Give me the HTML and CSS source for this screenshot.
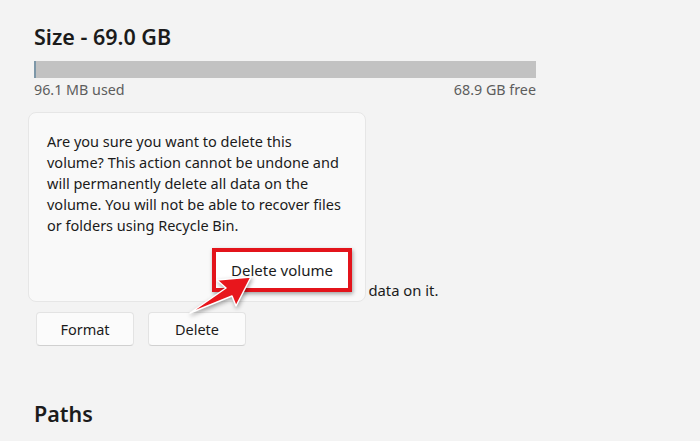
FILE: index.html
```html
<!DOCTYPE html>
<html lang="en">
<head>
    <meta charset="UTF-8">
    <title>Volume properties</title>
    <link rel="stylesheet" href="styles.css">
</head>
<body>
    <div class="page">
        <h2 class="title">Size - 69.0 GB</h2>
        <div class="bar"><div class="bar-used"></div></div>
        <div class="bar-labels">
            <span>96.1 MB used</span>
            <span>68.9 GB free</span>
        </div>
        <p class="format-note">Formatting or deleting this volume will erase all data on it.</p>
        <div class="actions">
            <button class="btn">Format</button>
            <button class="btn">Delete</button>
        </div>
        <h2 class="title paths">Paths</h2>

        <div class="flyout">
            <p>Are you sure you want to delete this<br>
            volume? This action cannot be undone and<br>
            will permanently delete all data on the<br>
            volume. You will not be able to recover files<br>
            or folders using Recycle Bin.</p>
            <div class="flyout-foot">
                <button class="btn confirm">Delete volume</button>
            </div>
        </div>

        <svg class="arrow" width="80" height="60" viewBox="0 0 80 60">
            <polygon points="71,12 37,15 46,23 10,48 52,31 56,41" fill="#e8161c" stroke="#fff" stroke-width="1.5" stroke-linejoin="round"/>
        </svg>
    </div>
</body>
</html>
```

FILE: styles.css
```css
body {
    margin: 0;
    background: #f3f3f3;
    font-family: "Noto Sans", "Open Sans", sans-serif;
    color: #1b1b1b;
}
.page {
    position: relative;
    width: 700px;
    height: 441px;
    padding: 24px 0 0 34px;
    box-sizing: border-box;
    overflow: hidden;
}
.title {
    margin: 0;
    font-size: 21.5px;
    font-weight: 600;
    line-height: 26px;
}
.bar {
    width: 502px;
    height: 17px;
    margin-top: 11px;
    background: #c2c2c2;
}
.bar-used {
    width: 2px;
    height: 100%;
    background: #7d97a8;
}
.bar-labels {
    display: flex;
    justify-content: space-between;
    width: 502px;
    margin-top: 2px;
    font-size: 14.3px;
    line-height: 20px;
    color: #5d5d5d;
}
.format-note {
    margin: 180px 0 0;
    font-size: 14.8px;
    line-height: 20px;
    white-space: nowrap;
}
.actions {
    display: flex;
    gap: 14px;
    margin-top: 12px;
    padding-left: 2px;
}
.btn {
    width: 98px;
    height: 34px;
    font-family: inherit;
    font-size: 14.5px;
    color: #1b1b1b;
    background: #fbfbfb;
    border: 1px solid #e3e3e3;
    border-bottom-color: #d0d0d0;
    border-radius: 4px;
}
.paths {
    margin-top: 55px;
}
.flyout {
    position: absolute;
    z-index: 1;
    left: 28px;
    top: 112px;
    width: 338px;
    height: 190px;
    box-sizing: border-box;
    padding: 18px 12px 0 18px;
    background: #f9f9f9;
    border: 1px solid #e6e6e6;
    border-radius: 8px;
}
.flyout p {
    margin: 0;
    font-size: 14.5px;
    line-height: 21px;
    white-space: nowrap;
}
.flyout-foot {
    display: flex;
    justify-content: flex-end;
    margin-top: 12px;
    margin-right: 1px;
}
.confirm {
    width: 140px;
    height: 44px;
    font-size: 15px;
    background: #fff;
    border: 4px solid #e3141b;
    border-radius: 0;
    box-shadow: 1px 2px 4px rgba(0, 0, 0, 0.35);
}
.arrow {
    position: absolute;
    z-index: 2;
    left: 180px;
    top: 265px;
    filter: drop-shadow(1px 2px 2px rgba(0, 0, 0, 0.35));
}
```
